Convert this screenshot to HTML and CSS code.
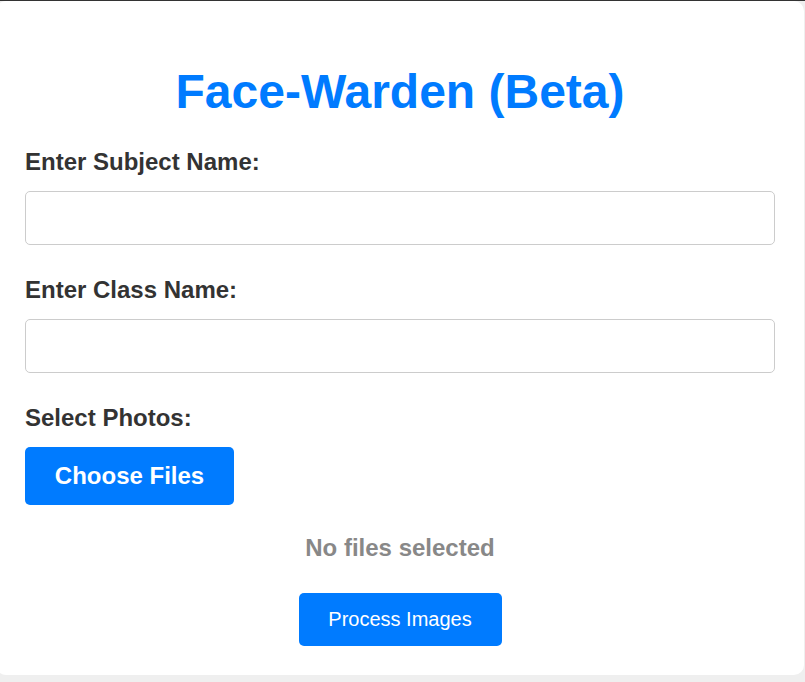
FILE: index.html
```html
<!DOCTYPE html>
<html lang="en">
<head>
<meta charset="utf-8">
<title>Face-Warden (Beta)</title>
<link rel="stylesheet" href="styles.css">
</head>
<body>
<div class="card">
  <h1 class="title">Face-Warden (Beta)</h1>
  <form class="form">
    <label class="label" for="subject">Enter Subject Name:</label>
    <input class="input" type="text" id="subject">
    <label class="label" for="klass">Enter Class Name:</label>
    <input class="input" type="text" id="klass">
    <label class="label">Select Photos:</label>
    <div class="file-row"><span class="choose-btn">Choose Files</span></div>
    <p class="status">No files selected</p>
    <div class="actions"><button type="button" class="process-btn">Process Images</button></div>
  </form>
</div>
</body>
</html>
```

FILE: styles.css
```css
html {
  background: #efefef;
}
body {
  margin: 0;
  border-top: 1px solid #333;
  font-family: "Liberation Sans", Arial, sans-serif;
  height: 681px;
  overflow: hidden;
}
.card {
  background: #fff;
  margin: 0 1px 0 -4px;
  padding: 30px 29px 29px 29px;
  border-radius: 10px;
}
.title {
  margin: 33px 0 29px;
  text-align: center;
  color: #007bff;
  font-size: 48px;
  font-weight: bold;
  line-height: 55px;
}
.form {
  display: flex;
  flex-direction: column;
  margin: 0;
}
.label {
  display: block;
  font-size: 24px;
  font-weight: bold;
  color: #333;
  line-height: 28px;
  margin-bottom: 15px;
}
.input {
  box-sizing: border-box;
  width: 100%;
  height: 54px;
  border: 1px solid #ccc;
  border-radius: 5px;
  margin: 0 0 31px;
  font-size: 18px;
  padding: 0 12px;
}
.file-row {
  display: flex;
}
.choose-btn {
  display: flex;
  align-items: center;
  justify-content: center;
  width: 209px;
  height: 58px;
  background: #007bff;
  color: #fff;
  font-size: 24px;
  font-weight: bold;
  border-radius: 5px;
}
.status {
  text-align: center;
  color: #888;
  font-size: 24px;
  font-weight: bold;
  line-height: 28px;
  margin: 29px 0 0;
}
.actions {
  display: flex;
  justify-content: center;
  margin-top: 31px;
}
.process-btn {
  width: 203px;
  height: 53px;
  background: #007bff;
  color: #fff;
  border: none;
  border-radius: 5px;
  font-family: "Liberation Sans", Arial, sans-serif;
  font-size: 20px;
  padding: 0;
}
```
